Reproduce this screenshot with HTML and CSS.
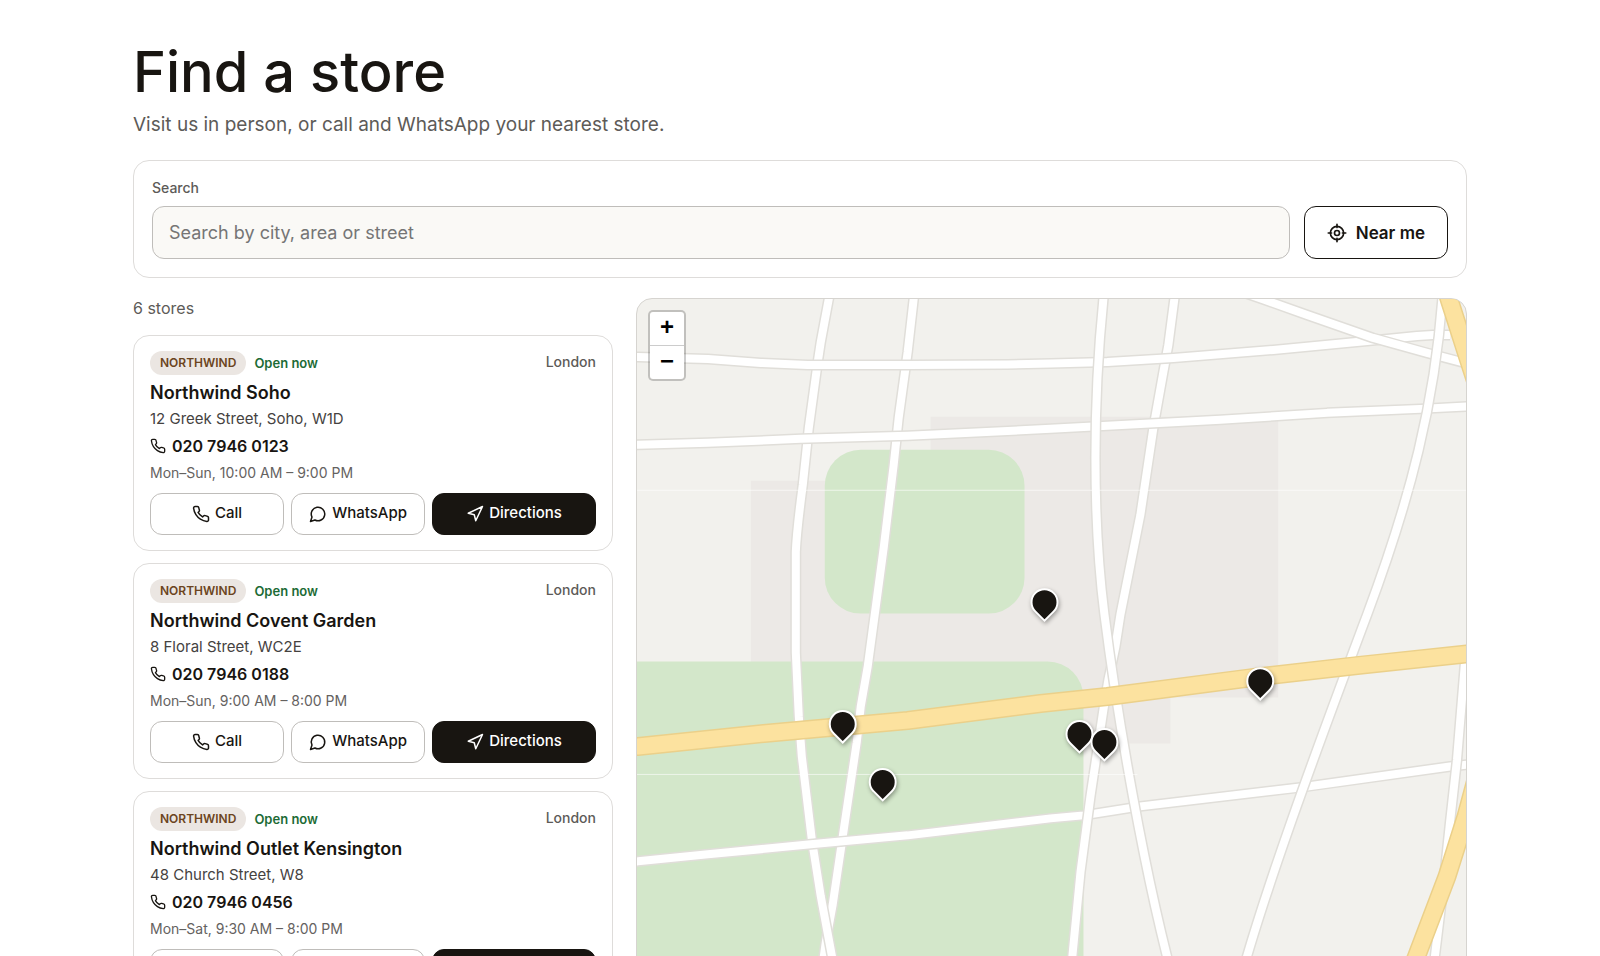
FILE: index.html
```html
<!DOCTYPE html>
<html lang="en">
<head>
<meta charset="utf-8">
<title>Find a store</title>
<link rel="stylesheet" href="styles.css">
</head>
<body>
<svg class="sprite" aria-hidden="true">
  <symbol id="i-phone" viewBox="0 0 24 24"><path d="M22 16.92v3a2 2 0 0 1-2.18 2 19.79 19.79 0 0 1-8.63-3.07 19.5 19.5 0 0 1-6-6 19.79 19.79 0 0 1-3.07-8.67A2 2 0 0 1 4.11 2h3a2 2 0 0 1 2 1.72 12.84 12.84 0 0 0 .7 2.81 2 2 0 0 1-.45 2.11L8.09 9.91a16 16 0 0 0 6 6l1.27-1.27a2 2 0 0 1 2.11-.45 12.84 12.84 0 0 0 2.81.7A2 2 0 0 1 22 16.92z"/></symbol>
  <symbol id="i-chat" viewBox="0 0 24 24"><path d="M7.9 20A9 9 0 1 0 4 16.1L2 22Z"/></symbol>
  <symbol id="i-nav" viewBox="0 0 24 24"><path d="M3 11 22 2l-9 19-2-8-8-2z"/></symbol>
  <symbol id="i-locate" viewBox="0 0 24 24"><circle cx="12" cy="12" r="8"/><circle cx="12" cy="12" r="3"/><path d="M12 1.5v4M12 18.500v4M1.500 12h4M18.500 12h4"/></symbol>
</svg>
<main class="page">
  <header class="intro">
    <h1 class="title">Find a store</h1>
    <p class="lead">Visit us in person, or call and WhatsApp your nearest store.</p>
  </header>

  <form class="search">
    <div class="field">
      <label class="label" for="q">Search</label>
      <input class="input" id="q" type="text" placeholder="Search by city, area or street">
    </div>
    <button class="near" type="button"><svg class="icon icon-bold"><use href="#i-locate"/></svg>Near me</button>
  </form>

  <div class="columns">
    <section class="stores">
      <p class="count">6 stores</p>

      <article class="card">
        <div class="card-top"><span class="badge">NORTHWIND</span><span class="open">Open now</span><span class="city">London</span></div>
        <h2 class="name">Northwind Soho</h2>
        <p class="address">12 Greek Street, Soho, W1D</p>
        <a class="phone" href="tel:02079460123"><svg class="icon icon-small"><use href="#i-phone"/></svg>020 7946 0123</a>
        <p class="hours">Mon–Sun, 10:00 AM – 9:00 PM</p>
        <div class="actions">
          <a class="action" href="tel:02079460123"><svg class="icon"><use href="#i-phone"/></svg><span class="action-text">Call</span></a>
          <a class="action" href="#whatsapp"><svg class="icon"><use href="#i-chat"/></svg><span class="action-text">WhatsApp</span></a>
          <a class="action action-dark" href="#directions"><svg class="icon"><use href="#i-nav"/></svg><span class="action-text">Directions</span></a>
        </div>
      </article>

      <article class="card">
        <div class="card-top"><span class="badge">NORTHWIND</span><span class="open">Open now</span><span class="city">London</span></div>
        <h2 class="name">Northwind Covent Garden</h2>
        <p class="address">8 Floral Street, WC2E</p>
        <a class="phone" href="tel:02079460188"><svg class="icon icon-small"><use href="#i-phone"/></svg>020 7946 0188</a>
        <p class="hours">Mon–Sun, 9:00 AM – 8:00 PM</p>
        <div class="actions">
          <a class="action" href="tel:02079460188"><svg class="icon"><use href="#i-phone"/></svg><span class="action-text">Call</span></a>
          <a class="action" href="#whatsapp"><svg class="icon"><use href="#i-chat"/></svg><span class="action-text">WhatsApp</span></a>
          <a class="action action-dark" href="#directions"><svg class="icon"><use href="#i-nav"/></svg><span class="action-text">Directions</span></a>
        </div>
      </article>

      <article class="card">
        <div class="card-top"><span class="badge">NORTHWIND</span><span class="open">Open now</span><span class="city">London</span></div>
        <h2 class="name">Northwind Outlet Kensington</h2>
        <p class="address">48 Church Street, W8</p>
        <a class="phone" href="tel:02079460456"><svg class="icon icon-small"><use href="#i-phone"/></svg>020 7946 0456</a>
        <p class="hours">Mon–Sat, 9:30 AM – 8:00 PM</p>
        <div class="actions">
          <a class="action" href="tel:02079460456"><svg class="icon"><use href="#i-phone"/></svg><span class="action-text">Call</span></a>
          <a class="action" href="#whatsapp"><svg class="icon"><use href="#i-chat"/></svg><span class="action-text">WhatsApp</span></a>
          <a class="action action-dark" href="#directions"><svg class="icon"><use href="#i-nav"/></svg><span class="action-text">Directions</span></a>
        </div>
      </article>
    </section>

    <section class="map" aria-label="Store map">
      <svg class="tiles" viewBox="636 299 830 700" aria-hidden="true">
        <defs>
          <path id="v2" d="M914 289L913 299L907 352L898 418L893 465L883 548L874 615L867 667L860 707L856 743L842 837L832 905L825 943L817 1000"/>
          <path id="v1" d="M830 289L828 299L820 342L817 362L808 428L802 485C799 508 796 530 795 552L795 653L798 717L801 757L811 840L820 897L831 956L840 1000"/>
          <path id="h3" d="M626 863L637 862L707 855L810 845L907 836L1050 819L1083 816L1140 807L1300 788L1450 767L1480 764"/>
          <path id="v4" d="M1175 289L1174 299L1168 345L1163 372L1153 428L1140 515L1120 615L1115 647L1108 680L1103 710L1090 797L1080 873L1072 956L1068 1000"/>
          <path id="h1" d="M626 357H637L707 359L760 363L807 365H907L1007 364.500L1050 363.500L1107 362L1173 358L1273 350L1367 341L1417 336L1433 335L1450 335"/>
          <path id="h2" d="M626 445H637L707 443L800 439L907 436L1050 429L1107 426L1220 420L1327 413L1420 409L1480 406"/>
          <path id="d1" d="M1230 288L1262 299L1307 315L1373 338L1427 353L1480 367"/>
          <path id="v3" d="M1104 289C1092 400 1092 520 1104 615S1144 880 1178 1000"/>
          <path id="v5" d="M1443 289C1436 400 1410 500 1367 615S1260 900 1235 1000"/>
          <path id="v6" d="M1466 655L1465 663L1457 760L1450 823L1443 890L1435 956L1430 1000"/>
          <path id="y1" d="M626 748L637 747L763 734L907 721L1040 704L1107 697L1260 677L1357 666L1480 653"/>
          <path id="y2" d="M1445 286L1449 299L1466 352L1481 398"/>
          <path id="y3" d="M1480 765L1466 817L1447 877L1417 956L1400 1000"/>
        </defs>
        <path class="block" d="M750 481H930V417H1278V698H1170V744H750z"/>
        <rect class="park" x="824" y="450" width="200" height="164" rx="36"/>
        <rect class="park" x="500" y="662" width="583" height="500" rx="36"/>
        <g class="road">
          <use class="casing" href="#v2"/><use href="#v2"/>
          <use class="casing" href="#v1"/><use href="#v1"/>
          <use class="casing" href="#h3"/><use href="#h3"/>
          <use class="casing" href="#v4"/><use href="#v4"/>
          <use class="casing" href="#h1"/><use href="#h1"/>
          <use class="casing" href="#h2"/><use href="#h2"/>
          <use class="casing" href="#d1"/><use href="#d1"/>
          <use class="casing" href="#v3"/><use href="#v3"/>
          <use class="casing" href="#v5"/><use href="#v5"/>
          <use class="casing" href="#v6"/><use href="#v6"/>
        </g>
        <g class="major">
          <use class="casing" href="#y1"/><use href="#y1"/>
          <use class="casing" href="#y2"/><use href="#y2"/>
          <use class="casing" href="#y3"/><use href="#y3"/>
        </g>
        <path class="seam" d="M636 490.500H1466M636 775H1137"/>
        <g class="pins">
          <path d="M1035 612a13 13 0 1 1 18 0l-9 9z"/>
          <path d="M1251 691a13 13 0 1 1 18 0l-9 9z"/>
          <path d="M833 734a13 13 0 1 1 18 0l-9 9z"/>
          <path d="M1070 744a13 13 0 1 1 18 0l-9 9z"/>
          <path d="M1095 752a13 13 0 1 1 18 0l-9 9z"/>
          <path d="M873 792a13 13 0 1 1 18 0l-9 9z"/>
        </g>
      </svg>
      <div class="zoom">
        <button class="zoom-btn" type="button" aria-label="Zoom in">+</button>
        <button class="zoom-btn" type="button" aria-label="Zoom out">−</button>
      </div>
    </section>
  </div>
</main>
</body>
</html>
```
FILE: styles.css
```css
* { box-sizing: border-box; }

body {
  margin: 0;
  background: #fff;
  color: #181511;
  font-family: Inter, "Liberation Sans", sans-serif;
}

h1, h2, p { margin: 0; }
a { color: inherit; text-decoration: none; }
button, input { font: inherit; color: inherit; }

.sprite { position: absolute; width: 0; height: 0; }

.icon {
  flex: none;
  width: 18px;
  height: 18px;
  fill: none;
  stroke: currentColor;
  stroke-width: 2;
  stroke-linecap: round;
  stroke-linejoin: round;
}
.icon-small { width: 16px; height: 16px; }
.icon-bold { width: 20px; height: 20px; }

.page {
  max-width: 1374px;
  margin: 0 auto;
  padding: 39px 20px;
}

.intro { margin-bottom: 21px; }
.title { font-size: 56px; line-height: 66px; font-weight: 500; }
.lead { margin-top: 6px; font-size: 19px; line-height: 28px; color: #5d5b58; }

.search {
  display: flex;
  align-items: flex-end;
  gap: 14px;
  padding: 18px;
  border: 1px solid #dedcda;
  border-radius: 16px;
}
.field { flex: 1; display: flex; flex-direction: column; gap: 9px; }
.label { font-size: 14px; line-height: 18px; font-weight: 500; color: #5d5b58; }
.input {
  width: 100%;
  height: 53px;
  padding: 0 16px;
  border: 1px solid #bfbdba;
  border-radius: 12px;
  background: #faf9f6;
  font-size: 18px;
}
.input::placeholder { color: #757575; opacity: 1; }
.near {
  display: flex;
  align-items: center;
  gap: 9px;
  height: 53px;
  padding: 0 22px;
  border: 1px solid #181511;
  border-radius: 12px;
  background: #fff;
  font-size: 17px;
  font-weight: 600;
}

.columns {
  display: grid;
  grid-template-columns: 480fr 831fr;
  align-items: start;
  gap: 23px;
  margin-top: 20px;
}

.stores { display: flex; flex-direction: column; gap: 12px; }
.count { margin-bottom: 5px; font-size: 16px; line-height: 20px; color: #5d5b58; }

.card {
  display: flex;
  flex-direction: column;
  padding: 15px 16px;
  border: 1px solid #dedcda;
  border-radius: 16px;
}
.card-top { display: flex; align-items: flex-start; }
.badge {
  padding: 0 10px;
  border-radius: 12px;
  background: #ebe6e2;
  color: #6b4420;
  font-size: 12px;
  line-height: 24px;
  font-weight: 600;
}
.open { margin-left: 8px; font-size: 13px; line-height: 24px; font-weight: 600; color: #1c6b35; }
.city { margin-left: auto; font-size: 14px; line-height: 22px; font-weight: 500; color: #5d5b58; }
.name { margin-top: 5px; font-size: 18px; line-height: 26px; font-weight: 600; }
.address { font-size: 15px; line-height: 26px; color: #45423f; }
.phone {
  display: flex;
  align-items: center;
  gap: 6px;
  font-size: 16px;
  line-height: 28px;
  font-weight: 600;
}
.hours { font-size: 14px; line-height: 26px; color: #65625f; }
.actions { display: grid; grid-template-columns: 9fr 9fr 11fr; gap: 7px; margin-top: 7px; }
.action {
  display: flex;
  align-items: center;
  justify-content: center;
  gap: 5px;
  height: 42px;
  border: 1px solid #bfbdba;
  border-radius: 12px;
  font-size: 15px;
  font-weight: 500;
}
.action-text { padding-bottom: 3px; }
.action-dark { border-color: #181511; background: #181511; color: #fff; }

.map {
  position: relative;
  overflow: hidden;
  border: 1px solid #d6d4d0;
  border-radius: 16px;
  background: #f2f1ed;
}
.tiles { display: block; width: 100%; height: auto; }
.block { fill: #ece9e6; }
.park { fill: #d3e7ca; }
.road, .major { fill: none; stroke-linejoin: round; }
.road { stroke: #fff; stroke-width: 8px; }
.road .casing { stroke: #e0ded9; stroke-width: 11px; }
.major { stroke: #fce29f; stroke-width: 16px; }
.major .casing { stroke: #ebd08a; stroke-width: 19px; }
.seam { stroke: #fff; stroke-opacity: 0.6; }
.pins {
  fill: #181511;
  stroke: #fff;
  stroke-width: 2px;
  filter: drop-shadow(1px 2px 2px rgba(0, 0, 0, 0.35));
}

.zoom {
  position: absolute;
  top: 11px;
  left: 11px;
  width: 38px;
  border: 2px solid rgba(0, 0, 0, 0.2);
  border-radius: 5px;
  background: #fff;
  background-clip: padding-box;
}
.zoom-btn {
  display: flex;
  justify-content: center;
  width: 100%;
  height: 33px;
  padding: 0;
  border: 0;
  background: none;
  color: #000;
  font-family: "Liberation Sans", sans-serif;
  font-size: 24px;
  line-height: 30px;
  font-weight: 700;
}
.zoom-btn + .zoom-btn { border-top: 1px solid #ccc; height: 34px; }
```
